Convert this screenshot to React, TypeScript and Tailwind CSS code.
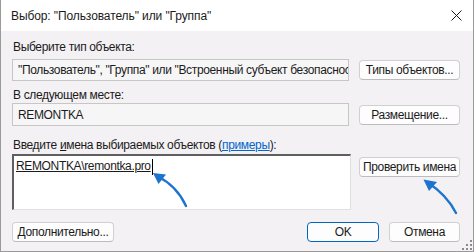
import React from 'react';

const btn =
  'h-[20px] rounded-[4px] border border-[#d0d0d0] border-b-[#bcbcbc] bg-[#fdfdfd] text-[#1b1b1b] flex items-center justify-center leading-none whitespace-nowrap';

export default function App() {
  return (
    <div className="relative w-[474px] h-[252px] overflow-hidden bg-[#f3f1f3] border-x border-b border-[#9a9a9a] font-['Liberation_Sans',Arial,sans-serif] text-[12px] tracking-[-0.35px] text-[#1b1b1b]">
      {/* Title bar */}
      <div className="h-[31px] bg-white flex items-center justify-between pl-[10px] pr-[11px]">
        <span className="text-[12px] tracking-[-0.1px]">Выбор: "Пользователь" или "Группа"</span>
        <svg width="11" height="11" viewBox="0 0 11 11" className="text-[#1b1b1b]">
          <path d="M0.5 0.5 L10.5 10.5 M10.5 0.5 L0.5 10.5" stroke="currentColor" strokeWidth="1" />
        </svg>
      </div>

      <div className="pl-[11px] pr-[13px]">
        <div className="pt-[8px] h-[24px] leading-[16px] pl-[1px]">Выберите тип объекта:</div>
        <div className="mt-[4px] grid grid-cols-[337px_101px] gap-x-[10px] items-center">
          <div className="h-[22px] border border-[#c6c6c6] bg-[#f7f6f7] pl-[5px] overflow-hidden">
            <div className="w-max leading-[20px]">"Пользователь", "Группа" или "Встроенный субъект безопасност</div>
          </div>
          <div className={btn}>Типы объектов...</div>
        </div>

        <div className="mt-[6px] h-[16px] leading-[16px] pl-[1px]">В следующем месте:</div>
        <div className="grid grid-cols-[337px_101px] gap-x-[10px] items-center">
          <div className="h-[23px] border border-[#c6c6c6] bg-[#f7f6f7] pl-[5px] flex items-center">REMONTKA</div>
          <div className={btn}>Размещение...</div>
        </div>

        <div className="mt-[11px] h-[16px] leading-[16px] whitespace-nowrap pl-[1px]">
          Введите <span className="underline">и</span>мена выбираемых объектов (
          <span className="text-[#0066cc] underline">примеры</span>):
        </div>
        <div className="mt-[1px] grid grid-cols-[339px_101px] gap-x-[8px] items-start">
          <div className="h-[56px] bg-white border-t-2 border-l-2 border-t-[#5f5f5f] border-l-[#5f5f5f] border-r border-b border-r-[#e0e0e0] border-b-[#e0e0e0] pl-[2px] pt-[1px]">
            <span className="underline leading-[18px]">REMONTKA\remontka.pro</span>
            <span className="inline-block w-px h-[16px] bg-black align-middle ml-[1px]" />
          </div>
          <div className={`${btn} mt-[3px]`}>Проверить имена</div>
        </div>

        <div className="mt-[12px] flex items-center">
          <div className={`${btn} w-[102px]`}>Дополнительно...</div>
          <div className="ml-auto flex gap-[10px]">
            <div className="h-[20px] w-[72px] rounded-[4px] border border-[#0067c0] bg-[#fdfdfd] flex items-center justify-center leading-none">OK</div>
            <div className={`${btn} w-[71px]`}>Отмена</div>
          </div>
        </div>
      </div>

      {/* Annotation arrows */}
      <svg className="absolute left-0 top-0 pointer-events-none" width="474" height="252" viewBox="0 0 474 252">
        <g stroke="#1c74cf" strokeWidth="2.4" fill="none" strokeLinecap="round">
          <path d="M185 206 Q176 186 156 176" />
          <path d="M455 213 Q446 195 426 182" />
        </g>
        <g fill="#1c74cf">
          <path d="M152 173 L165 174.5 L157.5 184 Z" />
          <path d="M422.5 179.5 L436 182 L428 191 Z" />
        </g>
      </svg>

      {/* Resize grip */}
      <svg className="absolute right-[1px] bottom-[1px]" width="10" height="10" viewBox="0 0 10 10">
        <g fill="#8a8a8a">
          <rect x="8" y="0" width="2" height="2" />
          <rect x="4" y="4" width="2" height="2" />
          <rect x="8" y="4" width="2" height="2" />
          <rect x="0" y="8" width="2" height="2" />
          <rect x="4" y="8" width="2" height="2" />
          <rect x="8" y="8" width="2" height="2" />
        </g>
      </svg>
    </div>
  );
}
